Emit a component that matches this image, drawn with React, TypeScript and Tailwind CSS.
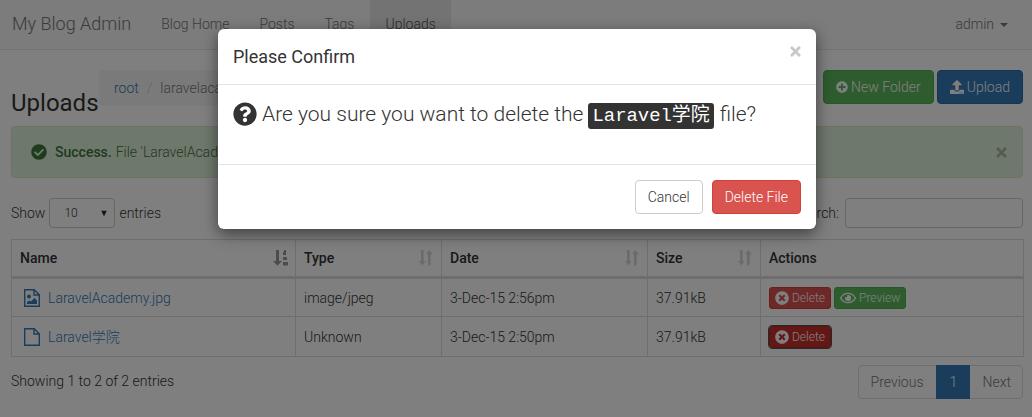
import { FaCheckCircle, FaPlusCircle, FaQuestionCircle, FaRegEye, FaTimes, FaTimesCircle, FaUpload } from 'react-icons/fa';

const navLinks = ['Blog Home', 'Posts', 'Tags', 'Uploads'];

function SortIcon() {
  return (
    <svg width="14" height="16" viewBox="0 0 14 16" className="fill-[#d6d6d6]">
      <path d="M2 0h2.6v11H6.5L3.3 15.5 0 11h2z" />
      <path d="M9 15.5h2.6V4.5H14L10.3 0 7 4.5h2z" />
    </svg>
  );
}

function SortActiveIcon() {
  return (
    <svg width="15" height="16" viewBox="0 0 15 16" className="-mr-px fill-[#999999]">
      <path d="M3 0h3v11h3l-4.500 4.800L0 11h3z" />
      <path d="M11 0h2v5h-3V2h1zM10 7h4v3h-4zM10 12h5v3.500h-5z" />
    </svg>
  );
}

function ImageFileIcon() {
  return (
    <svg width="16" height="18" viewBox="0 0 16 18" className="shrink-0 fill-none stroke-[#337ab7]" strokeWidth="1.4">
      <path d="M.7.700h9.500l5.100 5.100v11.500H.7z" />
      <path d="M10 .700v5.300h5.300" />
      <circle cx="5" cy="7.500" r="2" className="fill-[#337ab7] stroke-none" />
      <path d="M3 15v-2l2.500-1.500 1.500 1 3.500-3.500 2.500 2.500V15z" className="fill-[#337ab7] stroke-none" />
    </svg>
  );
}

function PlainFileIcon() {
  return (
    <svg width="16" height="18" viewBox="0 0 16 18" className="shrink-0 fill-none stroke-[#337ab7]" strokeWidth="1.4">
      <path d="M.7.700h9.500l5.100 5.100v11.500H.7z" />
      <path d="M10 .700v5.300h5.300" />
    </svg>
  );
}

function HeadCell({ label, width, sort }: { label: string; width: string; sort?: boolean }) {
  return (
    <th className={`${width} h-[38px] border border-b-[3px] border-[#dddddd] px-2 pb-px text-left font-medium`}>
      <div className="flex items-center justify-between">
        <span>{label}</span>
        {sort && <SortIcon />}
      </div>
    </th>
  );
}

function DeleteButton({ focused }: { focused?: boolean }) {
  return (
    <button
      className={`flex h-[22px] items-center gap-[3px] rounded-[3px] border px-[5px] text-xs text-white ${
        focused ? 'border-[#ac2925] bg-[#c9302c] outline outline-1 outline-[#555555]' : 'border-[#d43f3a] bg-[#d9534f]'
      }`}
    >
      <FaTimesCircle className="text-[14px]" />
      Delete
    </button>
  );
}

export default function App() {
  return (
    <div className="relative h-[417px] w-[1032px] overflow-hidden bg-white font-['Roboto',sans-serif] text-sm font-light text-[#333333]">
      <nav className="flex h-[50px] border-b border-[#e7e7e7] bg-[#f8f8f8] pl-3 pr-[24px] text-[#777777]">
        <span className="mr-[15px] flex items-center pb-px text-lg">My Blog Admin</span>
        {navLinks.map((link) => (
          <a key={link} className={`flex items-center px-[15px] pb-px ${link === 'Uploads' ? 'ml-px bg-[#e7e7e7] text-[#555555]' : ''}`}>
            {link}
          </a>
        ))}
        <div className="ml-auto flex items-center gap-[6px] pb-px">
          admin
          <span className="mt-[2px] border-x-4 border-t-4 border-x-transparent border-t-[#777777]" />
        </div>
      </nav>

      <main className="pl-[11px] pr-[9px] pt-5">
        <div className="flex items-start">
          <h3 className="mt-5 w-[88px] text-2xl leading-[26px] font-normal">Uploads</h3>
          <div className="flex h-9 w-[710px] items-center gap-2 rounded bg-[#f5f5f5] px-[15px]">
            <a className="text-[#337ab7]">root</a>
            <span className="text-[#cccccc]">/</span>
            <span className="text-[#777777]">laravelacademy</span>
          </div>
          <div className="ml-auto flex gap-[3px]">
            <button className="flex h-[34px] items-center gap-[3px] rounded border border-[#4cae4c] bg-[#5cb85c] px-3 text-white">
              <FaPlusCircle className="text-[12px]" />
              New Folder
            </button>
            <button className="flex h-[34px] items-center gap-[3px] rounded border border-[#2e6da4] bg-[#337ab7] px-3 text-white">
              <FaUpload className="text-[14px]" />
              Upload
            </button>
          </div>
        </div>

        <div className="mt-[10px] flex h-[52px] items-center rounded border border-[#d6e9c6] bg-[#dff0d8] pl-[19px] pr-[13px] text-[#3c763d]">
          <FaCheckCircle className="mr-[8px] text-[16px]" />
          <strong className="mr-1 font-medium">Success.</strong>
          File 'LaravelAcademy.jpg' renamed.
          <FaTimes className="ml-auto text-[15px] text-[#a9b9a2]" />
        </div>

        <div className="mt-[20px] flex h-[30px] items-center">
          <span>Show</span>
          <div className="mx-[4px] flex h-[30px] w-[66px] items-center justify-between rounded border border-[#cccccc] pl-[14px] pr-[6px] text-xs">
            10
            <span className="text-[9px] text-[#222222]">▼</span>
          </div>
          <span>entries</span>
          <span className="ml-auto mr-[6px]">Search:</span>
          <div className="h-[30px] w-[178px] rounded border border-[#cccccc]" />
        </div>

        <table className="mt-[11px] w-[1012px] table-fixed border-collapse">
          <thead>
            <tr>
              <th className="h-[38px] w-[284px] border border-b-[3px] border-[#dddddd] px-2 pb-px text-left font-medium">
                <div className="flex items-center justify-between">
                  <span>Name</span>
                  <SortActiveIcon />
                </div>
              </th>
              <HeadCell label="Type" width="w-[146px]" sort />
              <HeadCell label="Date" width="w-[206px]" sort />
              <HeadCell label="Size" width="w-[113px]" sort />
              <HeadCell label="Actions" width="w-[263px]" />
            </tr>
          </thead>
          <tbody>
            <tr className="h-[39px]">
              <td className="border border-[#dddddd] px-2">
                <a className="flex items-center gap-2 pl-[4px] text-[#337ab7]">
                  <ImageFileIcon />
                  LaravelAcademy.jpg
                </a>
              </td>
              <td className="border border-[#dddddd] px-2">image/jpeg</td>
              <td className="border border-[#dddddd] px-2">3-Dec-15 2:56pm</td>
              <td className="border border-[#dddddd] px-2">37.91kB</td>
              <td className="border border-[#dddddd] px-2">
                <div className="flex gap-[3px]">
                  <DeleteButton />
                  <button className="flex h-[22px] items-center gap-[3px] rounded-[3px] border border-[#4cae4c] bg-[#5cb85c] px-[5px] text-xs text-white">
                    <FaRegEye className="text-[16px]" />
                    Preview
                  </button>
                </div>
              </td>
            </tr>
            <tr className="h-[40px]">
              <td className="border border-[#dddddd] px-2">
                <a className="flex items-center gap-2 pl-[4px] text-[#337ab7]">
                  <PlainFileIcon />
                  <span className="font-['Roboto','Noto_Sans_CJK_SC',sans-serif]">Laravel学院</span>
                </a>
              </td>
              <td className="border border-[#dddddd] px-2">Unknown</td>
              <td className="border border-[#dddddd] px-2">3-Dec-15 2:50pm</td>
              <td className="border border-[#dddddd] px-2">37.91kB</td>
              <td className="border border-[#dddddd] px-2">
                <DeleteButton focused />
              </td>
            </tr>
          </tbody>
        </table>

        <div className="mt-2 flex items-center justify-between">
          <span className="pb-[2px]">Showing 1 to 2 of 2 entries</span>
          <div className="flex h-[34px] items-center rounded border border-[#dddddd] text-[#777777]">
            <span className="pl-3 pr-[13px]">Previous</span>
            <span className="flex h-[34px] w-[34px] items-center justify-center bg-[#337ab7] text-white">1</span>
            <span className="pl-3 pr-[11px]">Next</span>
          </div>
        </div>
      </main>

      <div className="absolute inset-0 bg-black/50" />

      <div className="absolute left-[218px] top-[29px] w-[598px] rounded-md bg-white shadow-[0_5px_15px_rgba(0,0,0,0.5)]">
        <div className="flex h-[56px] items-center justify-between border-b border-[#e5e5e5] pl-[15px] pr-[13px]">
          <h4 className="text-lg font-normal">Please Confirm</h4>
          <FaTimes className="mb-[10px] text-[15px] text-[#c8c8c8]" />
        </div>
        <div className="flex h-[80px] items-start border-b border-[#e5e5e5] px-[15px] pt-4 text-[21px] leading-[26px]">
          <FaQuestionCircle className="mr-[5px] mt-px text-[24px]" />
          Are you sure you want to delete the
          <code className="ml-[5px] mr-[6px] mt-[2px] rounded-[3px] bg-[#333333] px-1 font-['Liberation_Mono','Noto_Sans_CJK_SC',monospace] text-[18.900px] font-normal text-white">
            Laravel学院
          </code>
          file?
        </div>
        <div className="flex h-[64px] items-center justify-end gap-[9px] px-[15px]">
          <button className="h-[34px] rounded border border-[#cccccc] px-3">Cancel</button>
          <button className="h-[34px] rounded border border-[#d43f3a] bg-[#d9534f] px-3 text-white">Delete File</button>
        </div>
      </div>
    </div>
  );
}
